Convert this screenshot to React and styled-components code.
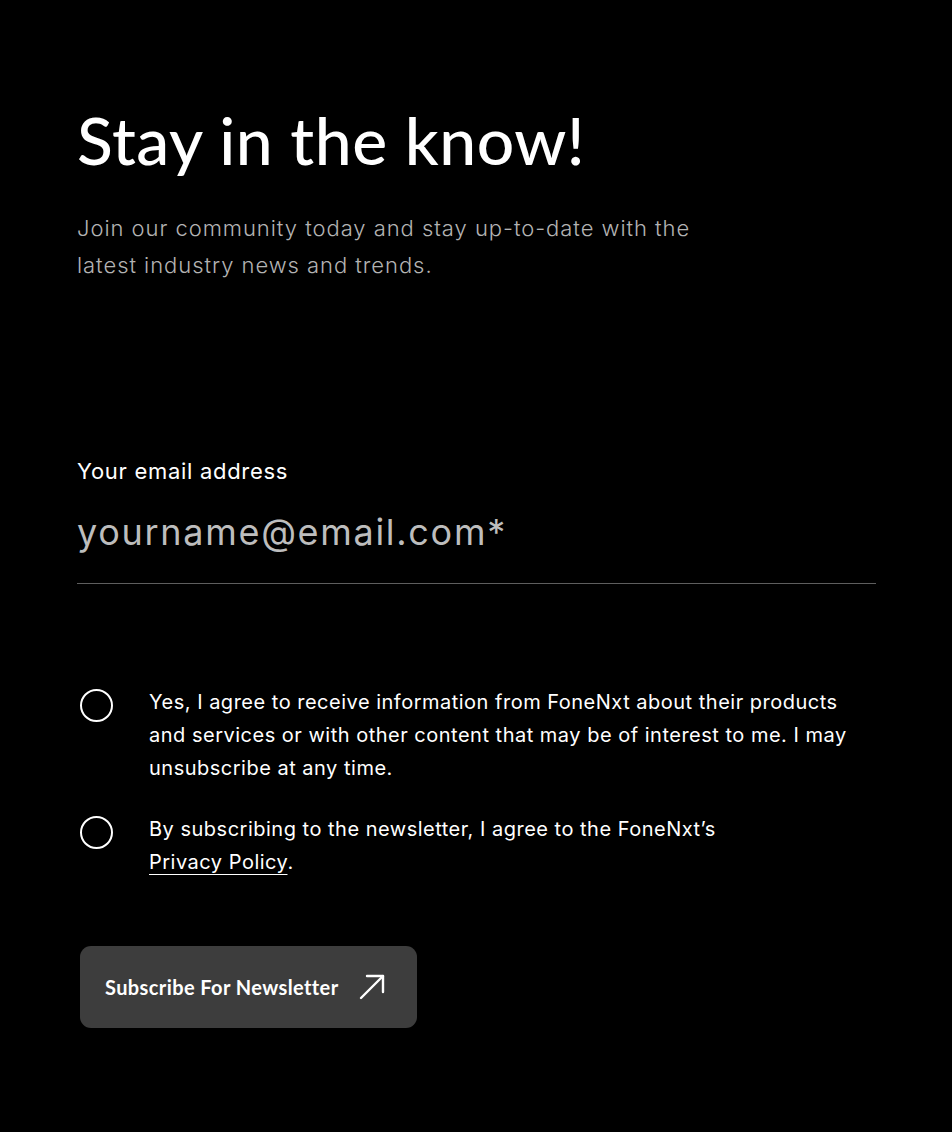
import React from "react";
import styled, { createGlobalStyle } from "styled-components";

const Global = createGlobalStyle`
  html, body { margin: 0; padding: 0; background: #000; }
  body { font-family: Inter, "Liberation Sans", sans-serif; }
  * { box-sizing: border-box; }
`;

const Page = styled.main`
  width: 952px;
  min-height: 1132px;
  background: #000;
  padding: 104px 76px 0 77px;
  display: flex;
  flex-direction: column;
`;

const Heading = styled.h1`
  margin: 0;
  font-family: Lato, "Noto Sans", sans-serif;
  font-weight: 500;
  font-size: 66px;
  line-height: 72px;
  color: #fff;
  letter-spacing: 0.5px;
`;

const Lead = styled.p`
  margin: 34px 0 0;
  max-width: 660px;
  font-size: 22px;
  line-height: 37px;
  font-weight: 300;
  letter-spacing: 0.95px;
  color: #b3b3b3;
`;

const Form = styled.form`
  margin-top: 172px;
  display: flex;
  flex-direction: column;
`;

const Label = styled.label`
  font-size: 22px;
  line-height: 30px;
  letter-spacing: 0.7px;
  color: #fff;
  font-weight: 400;
`;

const Input = styled.input`
  margin-top: 24px;
  width: 100%;
  background: transparent;
  border: none;
  border-bottom: 1px solid #5e5e5e;
  padding: 0 0 29px;
  font-family: Inter, "Liberation Sans", sans-serif;
  font-size: 36px;
  line-height: 44px;
  letter-spacing: 1.7px;
  font-weight: 400;
  color: #fff;
  outline: none;
  &::placeholder { color: #bdbdbd; }
`;

const Options = styled.div`
  margin-top: 102px;
  display: flex;
  flex-direction: column;
  gap: 28px;
`;

const Option = styled.label`
  display: flex;
  align-items: flex-start;
  gap: 36px;
  padding-left: 3px;
`;

const Circle = styled.span`
  flex: none;
  width: 33px;
  height: 33px;
  border: 2.5px solid #fff;
  border-radius: 50%;
  margin-top: 3px;
`;

const OptionText = styled.span`
  font-size: 20px;
  line-height: 33px;
  color: #fff;
  max-width: 710px;
  letter-spacing: 0.5px;
`;

const Link = styled.a`
  color: #fff;
  text-decoration: underline;
  text-underline-offset: 5px;
  text-decoration-thickness: 1px;
`;

const Button = styled.button`
  margin-top: 67px;
  margin-left: 3px;
  align-self: flex-start;
  width: 337px;
  height: 82px;
  border: none;
  border-radius: 11px;
  background: #3d3d3d;
  color: #fff;
  display: flex;
  align-items: center;
  padding: 0 32px 0 25px;
  justify-content: space-between;
  font-family: Lato, "Noto Sans", sans-serif;
  font-weight: 700;
  font-size: 20px;
  letter-spacing: 0.4px;
  cursor: pointer;
`;

export default function App() {
  return (
    <>
      <Global />
      <Page>
        <Heading>Stay in the know!</Heading>
        <Lead>
          Join our community today and stay up-to-date with the latest industry news and trends.
        </Lead>
        <Form onSubmit={(e) => e.preventDefault()}>
          <Label htmlFor="email">Your email address</Label>
          <Input id="email" type="email" placeholder="yourname@email.com*" />
          <Options>
            <Option>
              <Circle />
              <OptionText>
                Yes, I agree to receive information from FoneNxt about their products and services or with other content that may be of interest to me. I may unsubscribe at any time.
              </OptionText>
            </Option>
            <Option>
              <Circle />
              <OptionText>
                By subscribing to the newsletter, I agree to the FoneNxt’s
                <br />
                <Link href="#">Privacy Policy</Link>.
              </OptionText>
            </Option>
          </Options>
          <Button type="submit">
            Subscribe For Newsletter
            <svg width="26" height="26" viewBox="0 0 26 26" fill="none" stroke="#fff" strokeWidth="2.4" strokeLinecap="round" strokeLinejoin="round">
              <path d="M2 24 L24 2" />
              <path d="M8 2 H24 V18" />
            </svg>
          </Button>
        </Form>
      </Page>
    </>
  );
}
